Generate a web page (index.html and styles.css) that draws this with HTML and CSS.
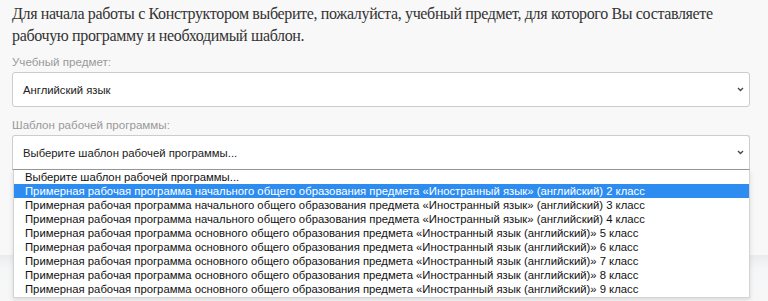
FILE: index.html
```html
<!DOCTYPE html>
<html lang="ru">
<head>
<meta charset="UTF-8" />
<meta name="viewport" content="width=device-width, initial-scale=1" />
<title>Конструктор рабочих программ</title>
<link rel="stylesheet" href="styles.css">
</head>
<body>

<main class="page">
  <p class="intro">Для начала работы с Конструктором выберите, пожалуйста, учебный предмет, для которого Вы составляете рабочую программу и необходимый шаблон.</p>

  <div class="field">
    <label class="field-label">Учебный предмет:</label>
    <div class="select">
      <span>Английский язык</span>
      <svg class="caret" width="7" height="5" viewBox="0 0 7 5"><path d="M1 1l2.5 2.5L6 1" fill="none" stroke="#444" stroke-width="1.3"/></svg>
    </div>
  </div>

  <div class="field">
    <label class="field-label">Шаблон рабочей программы:</label>
    <div class="select open">
      <span>Выберите шаблон рабочей программы...</span>
      <svg class="caret" width="7" height="5" viewBox="0 0 7 5"><path d="M1 1l2.5 2.5L6 1" fill="none" stroke="#444" stroke-width="1.3"/></svg>
    </div>
    <ul class="options">
      <li>Выберите шаблон рабочей программы...</li>
      <li class="active">Примерная рабочая программа начального общего образования предмета «Иностранный язык» (английский) 2 класс</li>
      <li>Примерная рабочая программа начального общего образования предмета «Иностранный язык» (английский) 3 класс</li>
      <li>Примерная рабочая программа начального общего образования предмета «Иностранный язык» (английский) 4 класс</li>
      <li>Примерная рабочая программа основного общего образования предмета «Иностранный язык (английский)» 5 класс</li>
      <li>Примерная рабочая программа основного общего образования предмета «Иностранный язык (английский)» 6 класс</li>
      <li>Примерная рабочая программа основного общего образования предмета «Иностранный язык (английский)» 7 класс</li>
      <li>Примерная рабочая программа основного общего образования предмета «Иностранный язык (английский)» 8 класс</li>
      <li>Примерная рабочая программа основного общего образования предмета «Иностранный язык (английский)» 9 класс</li>
    </ul>
  </div>
</main>

<div class="footer-shade"></div>

</body>
</html>
```

FILE: styles.css
```css
html, body {
  margin: 0;
  padding: 0;
}
body {
  background: #f8f8f8;
  color: #333;
  font-family: "Liberation Sans", Arial, sans-serif;
  position: relative;
  min-height: 301px;
  overflow: hidden;
}
.page {
  position: relative;
  z-index: 1;
  padding: 3px 18px 0 12px;
}
.intro {
  font-family: "Liberation Serif", "Times New Roman", serif;
  font-size: 16px;
  letter-spacing: -0.35px;
  line-height: 22px;
  color: #333;
  margin: 0 -10px 8px 0;
}
.field-label {
  display: block;
  font-size: 11.6px;
  line-height: 14px;
  color: #999;
  margin-bottom: 3px;
}
.field + .field {
  margin-top: 11px;
}
.select {
  display: flex;
  align-items: center;
  justify-content: space-between;
  height: 33px;
  padding: 0 5px 0 10px;
  background: #fff;
  border: 1px solid #ccc;
  border-radius: 3px;
  font-size: 11.3px;
  color: #222;
}
.select.open {
  border-bottom-color: #999;
  border-radius: 3px 3px 0 0;
}
.caret {
  display: block;
}
.options {
  list-style: none;
  margin: 0 0 0 1px;
  padding: 0 0 1px;
  background: #fff;
  border: 1px solid #d4d4d4;
  border-top: none;
  box-shadow: 0 2px 5px rgb(0 0 0 / 0.12);
  font-size: 11.3px;
}
.options li {
  height: 14px;
  line-height: 14px;
  padding-left: 11px;
  color: #111;
  white-space: nowrap;
}
.options li.active {
  background: #2d8cf0;
  color: #fff;
}
.footer-shade {
  position: absolute;
  left: 0;
  right: 0;
  top: 255px;
  height: 46px;
  background: linear-gradient(#e9ecee, #f5f6f7 14px, #f7f7f7);
}
```
